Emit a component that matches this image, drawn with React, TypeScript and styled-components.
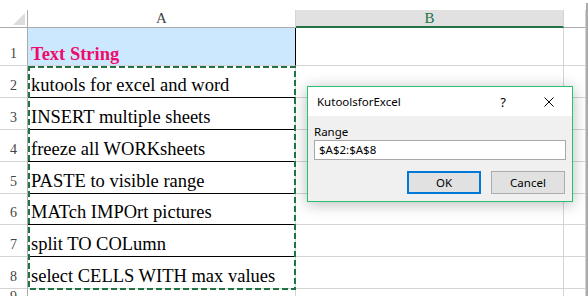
import React from "react";
import styled, { createGlobalStyle } from "styled-components";

const GlobalStyle = createGlobalStyle`
  html, body {
    margin: 0;
    padding: 0;
    background: #ffffff;
    overflow: hidden;
  }
`;

const grid_line = "#d4d4d4";
const head_line = "#ababab";
const excel_green = "#217346";

const Frame = styled.div`
  position: relative;
  width: 586px;
  height: 296px;
  background: #ffffff;
  box-shadow: 2px 3px 0 #ababab;
  overflow: hidden;
`;

const TopStrip = styled.div`
  height: 10px;
`;

const Sheet = styled.div`
  display: grid;
  grid-template-columns: 28px 268px 268px 22px;
  grid-template-rows: 18px 38px 32px 32px 32px 32px 31px 32px 32px 1fr;
  height: 286px;
`;

const Cell = styled.div<{ $bg?: string; $bottom?: string; $right?: string }>`
  box-sizing: border-box;
  display: flex;
  align-items: flex-end;
  padding: 0 0 2px 3px;
  background: ${(p) => p.$bg || "#ffffff"};
  border-right: 1px solid ${(p) => p.$right || grid_line};
  border-bottom: 1px solid ${(p) => p.$bottom || grid_line};
  font-family: "Liberation Serif", "Times New Roman", serif;
  font-size: 18.5px;
  line-height: 20px;
  color: #000000;
  white-space: nowrap;
  overflow: hidden;
`;

const TitleText = styled.span`
  font-weight: bold;
  color: #ee0c6c;
  margin-bottom: -1px;
`;

const RowHead = styled.div`
  box-sizing: border-box;
  display: flex;
  align-items: flex-end;
  justify-content: center;
  padding-bottom: 3px;
  border-right: 1px solid ${head_line};
  border-bottom: 1px solid ${grid_line};
  font-family: "Liberation Serif", "Times New Roman", serif;
  font-size: 14px;
  line-height: 16px;
  color: #444444;
`;

const ColHead = styled.div<{ $active?: boolean }>`
  box-sizing: border-box;
  display: flex;
  align-items: center;
  justify-content: center;
  background: ${(p) => (p.$active ? "#e1e1e1" : "#ffffff")};
  border-right: 1px solid ${grid_line};
  border-bottom: ${(p) =>
    p.$active ? `2px solid ${excel_green}` : `1px solid ${head_line}`};
  font-family: "Liberation Serif", "Times New Roman", serif;
  font-size: 15px;
  color: ${(p) => (p.$active ? excel_green : "#444444")};
`;

const Corner = styled.div`
  box-sizing: border-box;
  display: flex;
  align-items: flex-end;
  justify-content: flex-end;
  padding: 0 2px 2px 0;
  border-right: 1px solid ${head_line};
  border-bottom: 1px solid ${head_line};
`;

const CornerTriangle = styled.span`
  width: 12px;
  height: 12px;
  background: #dcdcdc;
  clip-path: polygon(100% 0, 100% 100%, 0 100%);
`;

const Marquee = styled.svg`
  position: absolute;
  left: 28px;
  top: 66px;
  width: 268px;
  height: 224px;
  pointer-events: none;
`;

/* dialog */

const Dialog = styled.div`
  position: absolute;
  left: 307px;
  top: 86px;
  width: 266px;
  height: 116px;
  box-sizing: border-box;
  border: 1px solid #25c36f;
  background: #f0f0f0;
  box-shadow: 0 2px 14px rgba(0, 0, 0, 0.28);
  display: flex;
  flex-direction: column;
  font-family: "Noto Sans", "Segoe UI", sans-serif;
  font-size: 11.5px;
  color: #000000;
`;

const TitleBar = styled.div`
  height: 29px;
  background: #ffffff;
  display: flex;
  align-items: center;
  padding-left: 9px;
`;

const DialogTitle = styled.span`
  flex: 1;
  line-height: 16px;
`;

const CaptionButton = styled.span`
  width: 46px;
  height: 29px;
  display: flex;
  align-items: center;
  justify-content: center;
  font-size: 13px;
`;

const Body = styled.div`
  flex: 1;
  padding: 8px 6px 0 6px;
  display: flex;
  flex-direction: column;
`;

const Label = styled.div`
  line-height: 16px;
`;

const RangeInput = styled.div`
  box-sizing: border-box;
  height: 20px;
  background: #ffffff;
  border: 1px solid #a8a8a8;
  padding-left: 4px;
  display: flex;
  align-items: center;
  line-height: 16px;
`;

const ButtonRow = styled.div`
  display: flex;
  justify-content: flex-end;
  gap: 10px;
  margin-top: 11px;
  padding-right: 1px;
`;

const Button = styled.div<{ $primary?: boolean }>`
  box-sizing: border-box;
  width: 74px;
  height: 23px;
  background: #e1e1e1;
  border: ${(p) => (p.$primary ? "2px solid #0078d7" : "1px solid #adadad")};
  display: flex;
  align-items: center;
  justify-content: center;
  line-height: 16px;
`;

const items = [
  "kutools for excel and word",
  "INSERT multiple sheets",
  "freeze all WORKsheets",
  "PASTE to visible range",
  "MATch IMPOrt pictures",
  "split TO COLumn",
  "select CELLS WITH max values",
];

const CloseIcon = () => (
  <svg width="10" height="10" viewBox="0 0 10 10">
    <path d="M0.5 0.5 L9.5 9.5 M9.5 0.5 L0.5 9.5" stroke="#000" strokeWidth="1" fill="none" />
  </svg>
);

const App = () => {
  return (
    <>
      <GlobalStyle />
      <Frame>
        <TopStrip />
        <Sheet>
          <Corner>
            <CornerTriangle />
          </Corner>
          <ColHead>A</ColHead>
          <ColHead $active>B</ColHead>
          <ColHead />

          <RowHead>1</RowHead>
          <Cell $bg="#cce8ff" $right="#000000">
            <TitleText>Text String</TitleText>
          </Cell>
          <Cell />
          <Cell />

          {items.map((text, i) => (
            <React.Fragment key={i}>
              <RowHead>{i + 2}</RowHead>
              <Cell $bottom={i < items.length - 1 ? "#000000" : undefined}>{text}</Cell>
              <Cell />
              <Cell />
            </React.Fragment>
          ))}

          <RowHead>9</RowHead>
          <Cell />
          <Cell />
          <Cell />
        </Sheet>

        <Marquee viewBox="0 0 268 224">
          <rect
            x="1"
            y="1"
            width="266"
            height="222"
            fill="none"
            stroke={excel_green}
            strokeWidth="2"
            strokeDasharray="6 3"
          />
        </Marquee>

        <Dialog>
          <TitleBar>
            <DialogTitle>KutoolsforExcel</DialogTitle>
            <CaptionButton>?</CaptionButton>
            <CaptionButton>
              <CloseIcon />
            </CaptionButton>
          </TitleBar>
          <Body>
            <Label>Range</Label>
            <RangeInput>$A$2:$A$8</RangeInput>
            <ButtonRow>
              <Button $primary>OK</Button>
              <Button>Cancel</Button>
            </ButtonRow>
          </Body>
        </Dialog>
      </Frame>
    </>
  );
};

export default App;
